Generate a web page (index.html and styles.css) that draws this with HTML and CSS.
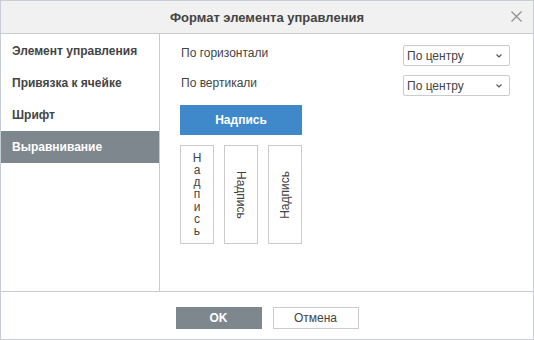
FILE: index.html
```html
<!DOCTYPE html>
<html lang="ru">

<head>
    <meta charset="UTF-8">
    <title>Формат элемента управления</title>
    <link rel="stylesheet" href="styles.css">
</head>

<body>
    <div class="dialog">
        <div class="dialog-header">
            <span class="dialog-title">Формат элемента управления</span>
            <svg class="close-btn" width="11" height="11" viewBox="0 0 11 11">
                <path d="M0.5 0.5 L10.5 10.5 M10.5 0.5 L0.5 10.5" stroke="#8c8c8c" stroke-width="1.1" fill="none" />
            </svg>
        </div>

        <div class="dialog-body">
            <ul class="nav">
                <li class="nav-item">Элемент управления</li>
                <li class="nav-item">Привязка к ячейке</li>
                <li class="nav-item">Шрифт</li>
                <li class="nav-item active">Выравнивание</li>
            </ul>

            <div class="content">
                <div class="field-row">
                    <span class="field-label">По горизонтали</span>
                    <div class="select">
                        <span>По центру</span>
                        <svg width="6" height="4" viewBox="0 0 6 4">
                            <path d="M0.5 0.5 L3 3 L5.5 0.5" stroke="#555" stroke-width="1.2" fill="none" />
                        </svg>
                    </div>
                </div>
                <div class="field-row">
                    <span class="field-label">По вертикали</span>
                    <div class="select">
                        <span>По центру</span>
                        <svg width="6" height="4" viewBox="0 0 6 4">
                            <path d="M0.5 0.5 L3 3 L5.5 0.5" stroke="#555" stroke-width="1.2" fill="none" />
                        </svg>
                    </div>
                </div>

                <div class="preview-horizontal">Надпись</div>

                <div class="preview-list">
                    <div class="preview-box"><span class="text-stacked">Надпись</span></div>
                    <div class="preview-box"><span class="text-down">Надпись</span></div>
                    <div class="preview-box"><span class="text-up">Надпись</span></div>
                </div>
            </div>
        </div>

        <div class="dialog-footer">
            <button class="btn btn-primary">OK</button>
            <button class="btn">Отмена</button>
        </div>
    </div>
</body>

</html>
```

FILE: styles.css
```css
body {
    margin: 0;
    padding: 0;
    font-family: 'Liberation Sans', Arial, sans-serif;
    font-size: 12px;
    color: #444;
    background: #fff;
}

.dialog {
    width: 534px;
    height: 340px;
    box-sizing: border-box;
    border: 1px solid #c6cdd5;
    display: flex;
    flex-direction: column;
    background: #fff;
}

.dialog-header {
    height: 32px;
    background: #f1f1f1;
    border-bottom: 1px solid #cbcbcb;
    display: flex;
    align-items: center;
    justify-content: center;
    position: relative;
}

.dialog-title {
    font-size: 13px;
    font-weight: bold;
    color: #444;
}

.close-btn {
    position: absolute;
    right: 11px;
    top: 10px;
}

.dialog-body {
    flex: 1;
    display: flex;
}

.nav {
    list-style: none;
    margin: 0;
    padding: 1px 0 0;
    width: 158px;
    border-right: 1px solid #cbcbcb;
}

.nav-item {
    height: 32px;
    line-height: 32px;
    padding-left: 11px;
    font-weight: bold;
    color: #444;
}

.nav-item.active {
    background: #7e868e;
    color: #fff;
}

.content {
    flex: 1;
    padding: 11px 23px 0 20px;
}

.field-row {
    display: flex;
    justify-content: space-between;
    align-items: flex-start;
    margin-bottom: 9px;
}

.field-label {
    line-height: 16px;
    padding-left: 1px;
}

.select {
    width: 107px;
    height: 21px;
    box-sizing: border-box;
    border: 1px solid #cbcbcb;
    border-radius: 2px;
    display: flex;
    align-items: center;
    justify-content: space-between;
    padding: 0 7px 0 3px;
}

.preview-horizontal {
    width: 122px;
    height: 30px;
    background: #3f89cb;
    color: #fff;
    font-weight: bold;
    display: flex;
    align-items: center;
    justify-content: center;
}

.preview-list {
    display: flex;
    gap: 10px;
    margin-top: 10px;
}

.preview-box {
    width: 34px;
    height: 99px;
    box-sizing: border-box;
    border: 1px solid #cbcbcb;
    display: flex;
    align-items: center;
    justify-content: center;
}

.text-stacked {
    width: 9px;
    word-break: break-all;
    text-align: center;
    line-height: 12.2px;
}

.text-down {
    writing-mode: vertical-rl;
}

.text-up {
    writing-mode: vertical-rl;
    transform: rotate(180deg);
}

.dialog-footer {
    height: 48px;
    border-top: 1px solid #cbcbcb;
    display: flex;
    justify-content: center;
    align-items: flex-start;
    gap: 11px;
    padding-top: 15px;
    box-sizing: border-box;
}

.btn {
    width: 86px;
    height: 22px;
    border: 1px solid #cbcbcb;
    background: #fff;
    font-family: inherit;
    font-size: 12px;
    color: #444;
    padding: 0;
    border-radius: 0;
}

.btn-primary {
    background: #7e868e;
    border-color: #7e868e;
    color: #fff;
    font-weight: bold;
}
```
